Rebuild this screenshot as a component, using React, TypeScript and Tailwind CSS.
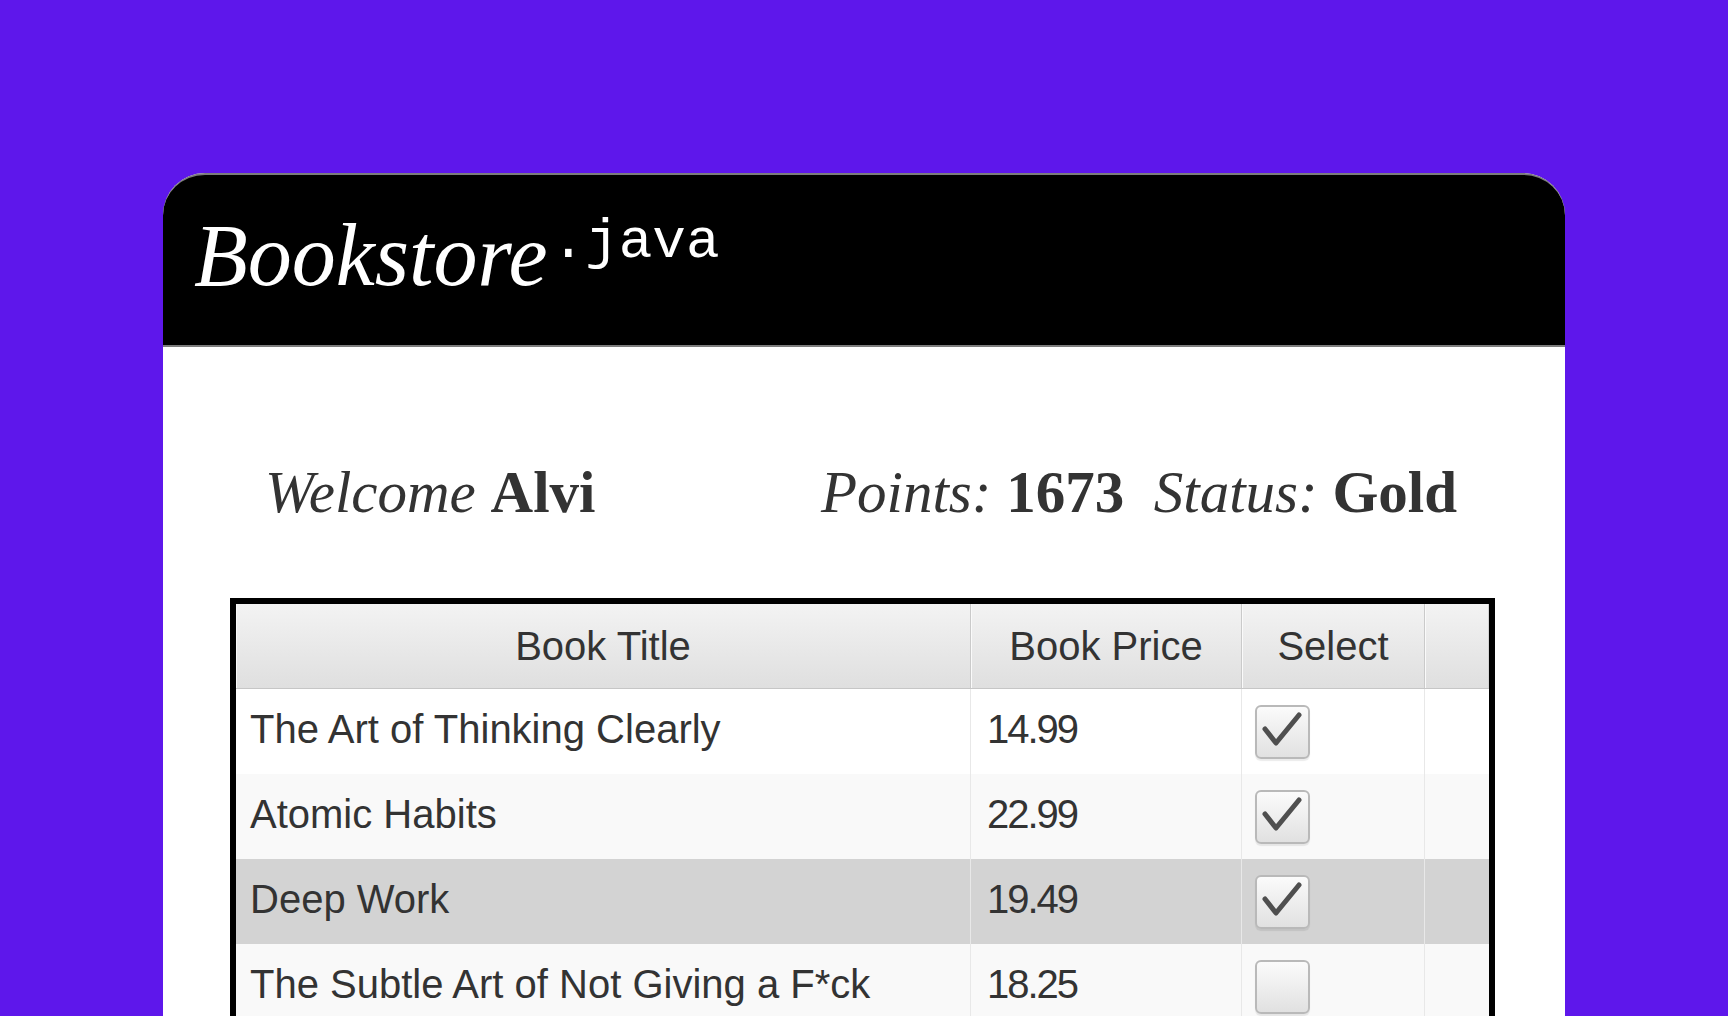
import React from "react";

type Book = {
  title: string;
  price: string;
  selected: boolean;
  rowBg: string;
};

const books: Book[] = [
  { title: "The Art of Thinking Clearly", price: "14.99", selected: true, rowBg: "bg-white" },
  { title: "Atomic Habits", price: "22.99", selected: true, rowBg: "bg-[#f9f9f9]" },
  { title: "Deep Work", price: "19.49", selected: true, rowBg: "bg-[#d3d3d3]" },
  { title: "The Subtle Art of Not Giving a F*ck", price: "18.25", selected: false, rowBg: "bg-[#f9f9f9]" },
];

function CheckBox({ checked }: { checked: boolean }) {
  return (
    <div className="flex h-[54px] w-[55px] items-center justify-center rounded-[6px] border-2 border-[#b9b9b9] bg-linear-to-b from-[#fbfbfb] to-[#e1e1e1] shadow-[0_2px_1px_rgba(0,0,0,0.08)]">
      {checked && (
        <svg width="55" height="54" viewBox="0 0 55 54" className="-m-[2px]">
          <path
            d="M10,24 L21,38 L44,10"
            fill="none"
            stroke="#4f4f4f"
            strokeWidth="5"
            strokeLinecap="round"
            strokeLinejoin="round"
          />
        </svg>
      )}
    </div>
  );
}

function BookTable() {
  return (
    <div className="ml-[67px] mt-[76px] w-[1265px] border-[6px] border-black font-['Liberation_Sans',Arial,sans-serif] text-[40px] leading-none text-[#333]">
      <div className="flex h-[85px] border-b border-[#c6c6c6] bg-linear-to-b from-[#f3f3f3] to-[#dfdfdf]">
        <div className="flex w-[735px] items-center justify-center border-r border-[#cacaca] shadow-[inset_1px_0_0_#fafafa]">
          Book Title
        </div>
        <div className="flex w-[271px] items-center justify-center border-r border-[#cacaca] shadow-[inset_1px_0_0_#fafafa]">
          Book Price
        </div>
        <div className="flex w-[183px] items-center justify-center border-r border-[#cacaca] shadow-[inset_1px_0_0_#fafafa]">
          Select
        </div>
        <div className="flex-1 border-r border-[#d2d2d2] shadow-[inset_1px_0_0_#fafafa]" />
      </div>

      {books.map((b) => (
        <div key={b.title} className={`flex h-[85px] ${b.rowBg}`}>
          <div className="flex w-[735px] items-center border-r border-[#e8e8e8] pb-[5px] pl-[14px]">
            {b.title}
          </div>
          <div className="flex w-[271px] items-center border-r border-[#e8e8e8] pb-[5px] pl-[16px] tracking-[-2px]">
            {b.price}
          </div>
          <div className="flex w-[183px] items-center border-r border-[#e8e8e8] pl-[13px]">
            <CheckBox checked={b.selected} />
          </div>
          <div className="flex-1" />
        </div>
      ))}
    </div>
  );
}

export default function App() {
  return (
    <div className="h-screen w-full overflow-hidden bg-[#5e17eb] pl-[163px] pt-[173px]">
      <div className="h-[1100px] w-[1402px] rounded-t-[42px] bg-white">
        <div className="h-[174px] rounded-t-[42px] border-y-2 border-[#7c7c7c] bg-black pl-[31px] pt-[37px]">
          <div className="whitespace-nowrap leading-none text-white">
            <span className="font-['Liberation_Serif',serif] text-[88px] italic">Bookstore</span>
            <span className="ml-[4px] align-[28px] font-['Liberation_Mono',monospace] text-[56px]">.java</span>
          </div>
        </div>

        <div className="flex justify-between whitespace-pre pl-[102px] pr-[108px] pt-[116px] font-['Liberation_Serif',serif] text-[59px] leading-none text-[#333]">
          <div>
            <span className="italic">Welcome </span>
            <span className="font-bold">Alvi</span>
          </div>
          <div>
            <span className="italic">Points: </span>
            <span className="font-bold">1673</span>
            <span>{"  "}</span>
            <span className="italic">Status: </span>
            <span className="font-bold">Gold</span>
          </div>
        </div>

        <BookTable />
      </div>
    </div>
  );
}
